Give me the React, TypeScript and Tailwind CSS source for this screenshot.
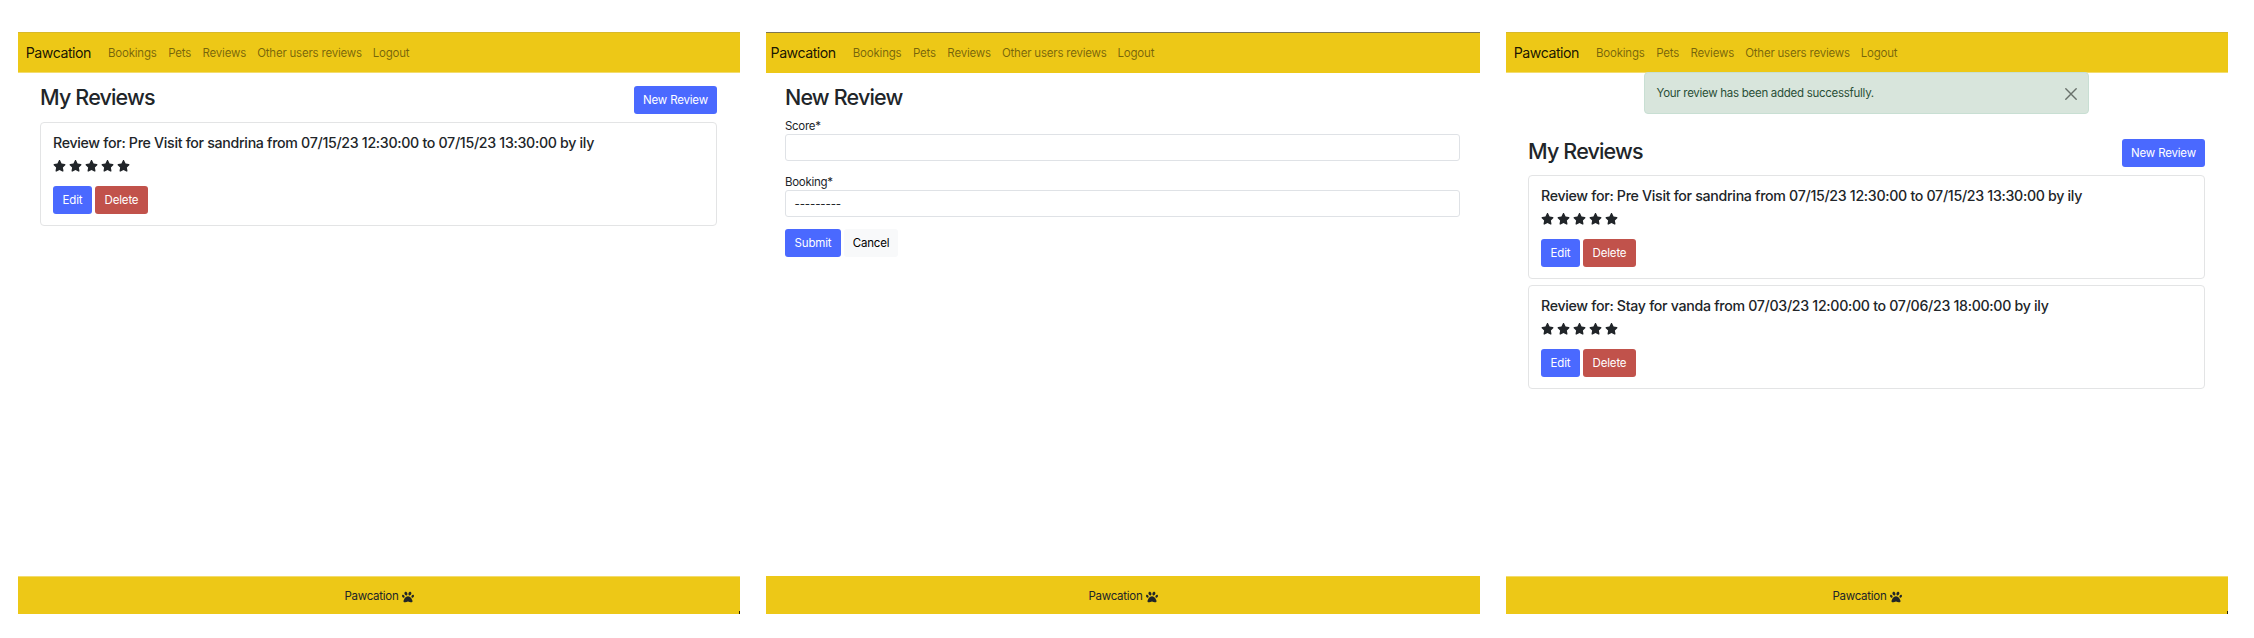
import React from 'react';
import { FaPaw, FaStar } from 'react-icons/fa6';

const navItems = [
  { label: 'Bookings', className: 'w-[60.2px]' },
  { label: 'Pets', className: 'w-[34.4px]' },
  { label: 'Reviews', className: 'w-[54.6px]' },
  { label: 'Other users reviews', className: 'w-[115.6px]' },
  { label: 'Logout', className: 'w-[40px]' },
];

function Navbar({ className }: { className: string }) {
  return (
    <nav className={`flex h-[41px] shrink-0 items-center whitespace-nowrap border-y bg-[#edc817] ${className}`}>
      <a className="w-[82.2px] shrink-0 text-[14.2px] tracking-[-0.5px] text-black/90">Pawcation</a>
      {navItems.map((item) => (
        <a key={item.label} className={`shrink-0 pt-[2px] tracking-[-0.21px] text-black/50 ${item.className}`}>
          {item.label}
        </a>
      ))}
    </nav>
  );
}

function Footer({ className, corner }: { className: string; corner?: boolean }) {
  return (
    <footer
      className={`relative mt-auto flex h-[38px] shrink-0 items-center justify-center gap-[3px] border-t bg-[#edc817] pt-[2px] ${className}`}
    >
      <span className="pt-px tracking-[-0.26px]">Pawcation</span>
      <FaPaw className="size-[12px]" />
      {corner && <span className="absolute bottom-0 right-0 h-[3px] w-px bg-[#2b2503]" />}
    </footer>
  );
}

function Button({ className, children }: { className: string; children: React.ReactNode }) {
  return (
    <button className={`flex h-7 items-center justify-center whitespace-nowrap rounded-[3px] pt-px tracking-[-0.18px] ${className}`}>
      {children}
    </button>
  );
}

function ReviewCard({ title }: { title: string }) {
  return (
    <article className="h-[104px] rounded-[4px] border border-[#e3e4e5] pl-3 pt-[11px]">
      <h5 className="whitespace-nowrap text-[14.2px] font-medium leading-[18px] tracking-[-0.31px]">{title}</h5>
      <div className="mt-[8px] flex h-[12.4px] items-center gap-[3.1px]">
        {[0, 1, 2, 3, 4].map((i) => (
          <FaStar key={i} className="h-[11.8px] w-[13px]" />
        ))}
      </div>
      <div className="mt-[13.6px] flex gap-[3px]">
        <Button className="w-[39px] bg-[#4a69ff] text-white">Edit</Button>
        <Button className="w-[53px] bg-[#c1524b] text-white">Delete</Button>
      </div>
    </article>
  );
}

function ReviewList({ reviews, headingClass }: { reviews: string[]; headingClass: string }) {
  return (
    <main className="ml-[22px] w-[677px]">
      <div className="flex h-[49px] items-start justify-between">
        <h2 className={`text-[21.5px] font-medium leading-7 tracking-[-0.84px] ${headingClass}`}>My Reviews</h2>
        <Button className="mt-[13px] w-[83px] bg-[#4a69ff] text-white">New Review</Button>
      </div>
      <div className="flex flex-col gap-1.5">
        {reviews.map((title) => (
          <ReviewCard key={title} title={title} />
        ))}
      </div>
    </main>
  );
}

function Alert() {
  return (
    <div className="ml-[138px] flex h-[42px] w-[445px] items-center justify-between rounded-[4px] border border-[#c8dfd3] bg-[#d8e5dc] pl-[11.5px] pr-[11px] pt-px text-[#2a4f37]">
      <span className="pt-px tracking-[-0.28px]">Your review has been added successfully.</span>
      <svg viewBox="0 0 12 12" className="size-3 text-[#68706b]" fill="none" stroke="currentColor" strokeWidth="1.4" strokeLinecap="round">
        <path d="M0.8 0.8 11.2 11.2M11.2 0.8 0.8 11.2" />
      </svg>
    </div>
  );
}

function ReviewForm() {
  return (
    <main className="ml-[19px] w-[675px]">
      <h2 className="pt-[10px] text-[21.5px] font-medium leading-7 tracking-[-0.84px]">New Review</h2>
      <label className="mt-[6px] block h-[17px] pt-px leading-4 tracking-[-0.3px]">Score*</label>
      <div className="h-[27px] rounded-[3px] border border-[#dfe2e6]" />
      <label className="mt-[12px] block h-[17px] pt-px leading-4 tracking-[-0.3px]">Booking*</label>
      <div className="flex h-[27px] items-center rounded-[3px] border border-[#dfe2e6] pl-[8.5px] pt-[2px] tracking-[-0.12px]">---------</div>
      <div className="mt-[12px] flex gap-[3px]">
        <Button className="w-[56px] bg-[#4a69ff] text-white">Submit</Button>
        <Button className="w-[54px] bg-[#f8f9fa] text-black">Cancel</Button>
      </div>
    </main>
  );
}

const preVisit = 'Review for: Pre Visit for sandrina from 07/15/23 12:30:00 to 07/15/23 13:30:00 by ily';
const stay = 'Review for: Stay for vanda from 07/03/23 12:00:00 to 07/06/23 18:00:00 by ily';

export default function App() {
  return (
    <div className="flex h-[638px] w-[2254px] gap-[26px] overflow-hidden bg-white pl-[18px] pt-8 font-['Inter',sans-serif] text-[11.5px] text-[#212529]">
      <section className="flex h-[582px] w-[722px] flex-col">
        <Navbar className="border-t-[#d9b92a] border-b-[#f3dc6d] pl-[7.8px]" />
        <ReviewList reviews={[preVisit]} headingClass="mt-[10px]" />
        <Footer className="border-t-[#f3dc6d]" corner />
      </section>
      <section className="flex h-[582px] w-[714px] flex-col">
        <Navbar className="border-t-[#7f7650] border-b-[#edc817] pl-[4.6px]" />
        <ReviewForm />
        <Footer className="border-t-[#edc817]" />
      </section>
      <section className="flex h-[582px] w-[722px] flex-col">
        <Navbar className="border-t-[#d9b92a] border-b-[#f3dc6d] pl-[7.8px]" />
        <div className="-mt-px h-[54px]">
          <Alert />
        </div>
        <ReviewList reviews={[preVisit, stay]} headingClass="mt-[11px]" />
        <Footer className="border-t-[#f3dc6d]" corner />
      </section>
    </div>
  );
}
